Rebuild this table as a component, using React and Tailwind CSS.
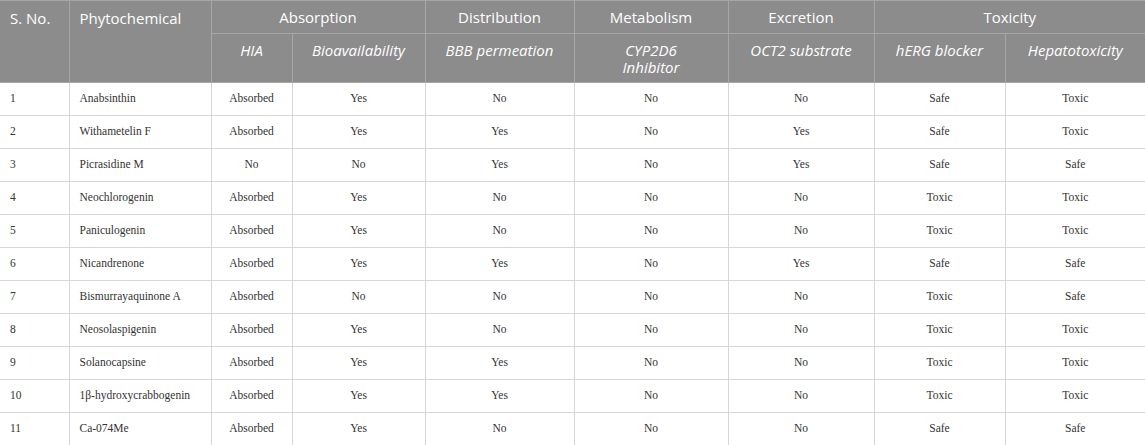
const rows = [
  ["1", "Anabsinthin", "Absorbed", "Yes", "No", "No", "No", "Safe", "Toxic"],
  ["2", "Withametelin F", "Absorbed", "Yes", "Yes", "No", "Yes", "Safe", "Toxic"],
  ["3", "Picrasidine M", "No", "No", "Yes", "No", "Yes", "Safe", "Safe"],
  ["4", "Neochlorogenin", "Absorbed", "Yes", "No", "No", "No", "Toxic", "Toxic"],
  ["5", "Paniculogenin", "Absorbed", "Yes", "No", "No", "No", "Toxic", "Toxic"],
  ["6", "Nicandrenone", "Absorbed", "Yes", "Yes", "No", "Yes", "Safe", "Safe"],
  ["7", "Bismurrayaquinone A", "Absorbed", "No", "No", "No", "No", "Toxic", "Safe"],
  ["8", "Neosolaspigenin", "Absorbed", "Yes", "No", "No", "No", "Toxic", "Toxic"],
  ["9", "Solanocapsine", "Absorbed", "Yes", "Yes", "No", "No", "Toxic", "Toxic"],
  ["10", "1β-hydroxycrabbogenin", "Absorbed", "Yes", "Yes", "No", "No", "Toxic", "Toxic"],
  ["11", "Ca-074Me", "Absorbed", "Yes", "No", "No", "No", "Safe", "Safe"],
];

const widths = [69, 142, 81, 133, 149, 154, 146, 131, 140];

const th = "border border-[#a6a6a6] font-normal text-white px-2.5";
const sub = "border border-[#a6a6a6] font-normal italic text-white px-2.5 pt-2 align-top leading-[17px]";

export default function App() {
  return (
    <div className="w-[1145px] h-[445px] overflow-hidden bg-white">
      <table className="w-[1145px] table-fixed border-collapse">
        <colgroup>
          {widths.map((w, i) => (
            <col key={i} style={{ width: w }} />
          ))}
        </colgroup>
        <thead className="bg-[#8c8c8c] text-[15px] font-['Open_Sans',sans-serif]">
          <tr className="h-[33px]">
            <th rowSpan={2} className={`${th} text-left align-top pt-[6px] border-l-0`}>S. No.</th>
            <th rowSpan={2} className={`${th} text-left align-top pt-[6px]`}>Phytochemical</th>
            <th colSpan={2} className={`${th} text-center align-middle`}>Absorption</th>
            <th className={`${th} text-center align-middle`}>Distribution</th>
            <th className={`${th} text-center align-middle`}>Metabolism</th>
            <th className={`${th} text-center align-middle`}>Excretion</th>
            <th colSpan={2} className={`${th} text-center align-middle border-r-0`}>Toxicity</th>
          </tr>
          <tr className="h-[49px]">
            <th className={`${sub} text-center`}>HIA</th>
            <th className={`${sub} text-center`}>Bioavailability</th>
            <th className={`${sub} text-center`}>BBB permeation</th>
            <th className={`${sub} text-center px-8`}>CYP2D6 Inhibitor</th>
            <th className={`${sub} text-center`}>OCT2 substrate</th>
            <th className={`${sub} text-center`}>hERG blocker</th>
            <th className={`${sub} text-center border-r-0`}>Hepatotoxicity</th>
          </tr>
        </thead>
        <tbody className="text-[11.5px] text-[#333333] font-['Liberation_Serif',serif]">
          {rows.map((r) => (
            <tr key={r[0]} className="h-[33px]">
              {r.map((c, i) => (
                <td
                  key={i}
                  className={`border border-[#d6d6d6] px-2.5 align-middle ${
                    i < 2 ? "text-left" : "text-center"
                  } ${i === 0 ? "border-l-0" : ""} ${i === 8 ? "border-r-0" : ""}`}
                >
                  {c}
                </td>
              ))}
            </tr>
          ))}
        </tbody>
      </table>
    </div>
  );
}
